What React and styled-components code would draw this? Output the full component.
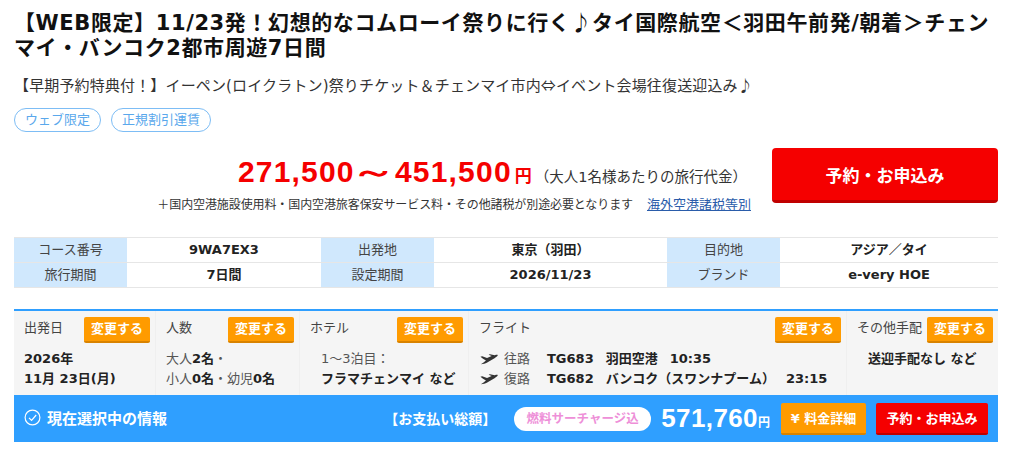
import React from "react"
import styled, { createGlobalStyle } from "styled-components"

const GlobalStyle = createGlobalStyle`
  html, body {
    margin: 0;
    background: #fff;
    color: #333;
    font-family: "DejaVu Sans", "Noto Sans CJK JP", sans-serif;
    overflow: hidden;
  }
`

const Page = styled.div`
  width: 984px;
  margin-left: 14px;
  padding-top: 11px;
`

const Title = styled.h1`
  margin: 0;
  font-size: 21px;
  line-height: 25px;
  letter-spacing: 0.6px;
  font-weight: bold;
  color: #111;
`

const Symbol = styled.span`
  font-family: "Noto Sans CJK JP", sans-serif;
  line-height: 0;
`

const Lead = styled.p`
  margin: 14px 0 0;
  font-size: 15px;
  line-height: 22px;
  letter-spacing: 0.15px;
  color: #333;
`

const Tags = styled.div`
  display: flex;
  gap: 10px;
  margin-top: 11px;
`

const Tag = styled.span`
  height: 22px;
  padding: 0 10px;
  border: 1px solid #7dbdf5;
  border-radius: 12px;
  font-size: 13px;
  line-height: 22px;
  color: #5aa8ec;
`

const PriceRow = styled.div`
  display: flex;
  justify-content: flex-end;
  gap: 21px;
  margin-top: 16px;
`

const PriceInfo = styled.div`
  display: flex;
  flex-direction: column;
  align-items: flex-end;
`

const PriceLine = styled.div`
  display: flex;
  align-items: baseline;
  padding-right: 4px;
  height: 48px;
`

const Price = styled.strong`
  font-family: "Liberation Sans", sans-serif;
  font-size: 30px;
  line-height: 48px;
  letter-spacing: 1.2px;
  color: #f50000;
`

const Wave = styled.span`
  display: inline-block;
  margin: 0 4.5px;
  line-height: 0;
  transform: scaleX(1.5);
`

const Yen = styled.strong`
  margin-left: 3px;
  font-size: 17px;
  color: #f50000;
`

const PriceNote = styled.span`
  margin-left: 3px;
  font-size: 14.5px;
  color: #333;
`

const TaxLine = styled.div`
  display: flex;
  align-items: baseline;
  gap: 14px;
  font-size: 12px;
  line-height: 18px;
  letter-spacing: -0.1px;
  color: #333;
`

const TaxLink = styled.a`
  font-size: 13px;
  letter-spacing: 0;
  color: #2a5caa;
  text-decoration: underline;
`

const BigButton = styled.button`
  width: 226px;
  height: 55px;
  border: 0;
  border-bottom: 3px solid #c00000;
  border-radius: 4px;
  background: #f50000;
  color: #fff;
  font-family: inherit;
  font-size: 17px;
  font-weight: bold;
`

const InfoTable = styled.div`
  display: grid;
  grid-template-columns: 113px 194px 113px 233px 113px 218px;
  margin-top: 23px;
  border-top: 1px solid #e6e6e6;
`

const InfoLabel = styled.div`
  height: 24px;
  border-bottom: 1px solid #e6e6e6;
  background: #d0e8fd;
  font-size: 13px;
  line-height: 24px;
  text-align: center;
  color: #444;
`

const InfoValue = styled.div`
  height: 24px;
  border-bottom: 1px solid #e6e6e6;
  font-size: 13px;
  font-weight: bold;
  line-height: 24px;
  text-align: center;
  color: #222;
`

const Panel = styled.section`
  margin-top: 21px;
  border-top: 2px solid #2f9fff;
`

const Cells = styled.div`
  display: grid;
  grid-template-columns: 142px 144px 169px 378px 151px;
  height: 84px;
  background: #f5f5f5;
`

const Cell = styled.div`
  padding: 6px 5px 0 10px;
  border-right: 1px solid #efefef;
  &:last-child {
    border-right: 0;
  }
`

const CellHead = styled.div`
  display: flex;
  align-items: flex-start;
  justify-content: space-between;
  height: 26px;
`

const CellTitle = styled.span`
  font-size: 13px;
  line-height: 22px;
  color: #444;
`

const ChangeButton = styled.button`
  width: 66px;
  height: 26px;
  padding: 0 0 3px;
  border: 0;
  border-bottom: 2px solid #d98300;
  border-radius: 2px;
  background: #ff9b00;
  color: #fff;
  font-family: inherit;
  font-size: 13px;
  font-weight: bold;
`

const CellBody = styled.div`
  margin-top: 6px;
  padding-left: ${(p) => p.$indent || 0}px;
  font-size: 13px;
  line-height: 20px;
  color: #555;
  b {
    color: #222;
  }
`

const FlightRow = styled.div`
  display: flex;
  align-items: center;
  height: 20px;
  padding-left: 1px;
  font-size: 13px;
  color: #555;
  b {
    color: #222;
  }
`

const FlightDir = styled.span`
  width: 43px;
  margin-left: 6px;
`

const FlightSeg = styled.b`
  margin-right: ${(p) => p.$gap || 0}px;
  white-space: pre;
`

const Bar = styled.div`
  display: flex;
  align-items: center;
  height: 47px;
  padding: 0 10px;
  background: #2f9fff;
  color: #fff;
`

const BarTitle = styled.strong`
  display: flex;
  align-items: center;
  gap: 6px;
  margin-bottom: 3px;
  font-size: 15px;
`

const PayLabel = styled.strong`
  margin-left: auto;
  margin-bottom: 1px;
  font-size: 14px;
`

const Pill = styled.span`
  width: 137px;
  height: 24px;
  margin-left: 18px;
  border-radius: 12px;
  background: #fff;
  color: #ee8fd8;
  font-size: 12.5px;
  font-weight: bold;
  line-height: 24px;
  text-align: center;
`

const Total = styled.strong`
  margin-left: 10px;
  font-family: "Liberation Sans", sans-serif;
  font-size: 26px;
  letter-spacing: 0.4px;
`

const TotalYen = styled.strong`
  margin-top: 6px;
  font-size: 12px;
`

const BarButton = styled.button`
  width: ${(p) => p.$w}px;
  height: 32px;
  margin-left: ${(p) => p.$gap}px;
  padding: 0;
  border: 0;
  border-bottom: 2px solid ${(p) => (p.$red ? "#c00000" : "#d98300")};
  border-radius: 2px;
  background: ${(p) => (p.$red ? "#f50000" : "#ff9b00")};
  color: #fff;
  font-family: inherit;
  font-size: 13px;
  font-weight: bold;
`

const CheckIcon = () => (
  <svg width="17" height="17" viewBox="0 0 17 17" fill="none" stroke="#fff" strokeWidth="1.2">
    <circle cx="8.5" cy="8.5" r="7.4" />
    <path d="M5 8.8l2.6 2.6L12.2 6" />
  </svg>
)

const PlaneIcon = () => (
  <svg width="18" height="11" viewBox="0 0 20 12" fill="#333">
    <path d="M0.5 3L2.4 2.4L7.8 4.4L13 2.2L9.6 0.8L11 0.2L16.5 1.4C18 0.8 19.2 0.7 19.8 1.1C19.6 2.2 18.4 3.2 16.6 4.2L8 9.2C6 10.4 3.2 11 1 11.2C3 10.2 5 8.8 6.6 7.2C4.4 6 2.2 4.6 0.5 3Z" />
  </svg>
)

const infoRows = [
  ["コース番号", "9WA7EX3", "出発地", "東京（羽田）", "目的地", "アジア／タイ"],
  ["旅行期間", "7日間", "設定期間", "2026/11/23", "ブランド", "e-very HOE"],
]

const App = () => {
  return (
    <Page>
      <GlobalStyle />
      <Title>
        【WEB限定】11/23発！幻想的なコムローイ祭りに行く<Symbol>♪</Symbol>タイ国際航空＜羽田午前発/朝着＞チェンマイ・バンコク2都市周遊7日間
      </Title>
      <Lead>
        【早期予約特典付！】イーペン(ロイクラトン)祭りチケット＆チェンマイ市内<Symbol>⇔</Symbol>イベント会場往復送迎込み<Symbol>♪</Symbol>
      </Lead>
      <Tags>
        <Tag>ウェブ限定</Tag>
        <Tag>正規割引運賃</Tag>
      </Tags>

      <PriceRow>
        <PriceInfo>
          <PriceLine>
            <Price>271,500<Wave>～</Wave>451,500</Price>
            <Yen>円</Yen>
            <PriceNote>（大人1名様あたりの旅行代金）</PriceNote>
          </PriceLine>
          <TaxLine>
            <span>＋国内空港施設使用料・国内空港旅客保安サービス料・その他諸税が別途必要となります</span>
            <TaxLink>海外空港諸税等別</TaxLink>
          </TaxLine>
        </PriceInfo>
        <BigButton>予約・お申込み</BigButton>
      </PriceRow>

      <InfoTable>
        {infoRows.flat().map((text, i) =>
          i % 2 === 0 ? <InfoLabel key={i}>{text}</InfoLabel> : <InfoValue key={i}>{text}</InfoValue>
        )}
      </InfoTable>

      <Panel>
        <Cells>
          <Cell>
            <CellHead>
              <CellTitle>出発日</CellTitle>
              <ChangeButton>変更する</ChangeButton>
            </CellHead>
            <CellBody>
              <b>2026年</b>
              <br />
              <b>11月 23日(月)</b>
            </CellBody>
          </Cell>
          <Cell>
            <CellHead>
              <CellTitle>人数</CellTitle>
              <ChangeButton>変更する</ChangeButton>
            </CellHead>
            <CellBody>
              大人<b>2名</b>・
              <br />
              小人<b>0名</b>・幼児<b>0名</b>
            </CellBody>
          </Cell>
          <Cell>
            <CellHead>
              <CellTitle>ホテル</CellTitle>
              <ChangeButton>変更する</ChangeButton>
            </CellHead>
            <CellBody $indent={11}>
              1～3泊目：
              <br />
              <b>フラマチェンマイ など</b>
            </CellBody>
          </Cell>
          <Cell>
            <CellHead>
              <CellTitle>フライト</CellTitle>
              <ChangeButton>変更する</ChangeButton>
            </CellHead>
            <CellBody>
              <FlightRow>
                <PlaneIcon />
                <FlightDir>往路</FlightDir>
                <FlightSeg $gap={12}>TG683</FlightSeg>
                <FlightSeg $gap={12}>羽田空港</FlightSeg>
                <FlightSeg>10:35</FlightSeg>
              </FlightRow>
              <FlightRow>
                <PlaneIcon />
                <FlightDir>復路</FlightDir>
                <FlightSeg $gap={12}>TG682</FlightSeg>
                <FlightSeg $gap={11}>バンコク（スワンナプーム）</FlightSeg>
                <FlightSeg>23:15</FlightSeg>
              </FlightRow>
            </CellBody>
          </Cell>
          <Cell>
            <CellHead>
              <CellTitle>その他手配</CellTitle>
              <ChangeButton>変更する</ChangeButton>
            </CellHead>
            <CellBody $indent={11}>
              <b>送迎手配なし など</b>
            </CellBody>
          </Cell>
        </Cells>
        <Bar>
          <BarTitle>
            <CheckIcon />
            現在選択中の情報
          </BarTitle>
          <PayLabel>【お支払い総額】</PayLabel>
          <Pill>燃料サーチャージ込</Pill>
          <Total>571,760</Total>
          <TotalYen>円</TotalYen>
          <BarButton $w={85} $gap={11}>¥ 料金詳細</BarButton>
          <BarButton $w={112} $gap={10} $red>予約・お申込み</BarButton>
        </Bar>
      </Panel>
    </Page>
  )
}

export default App
